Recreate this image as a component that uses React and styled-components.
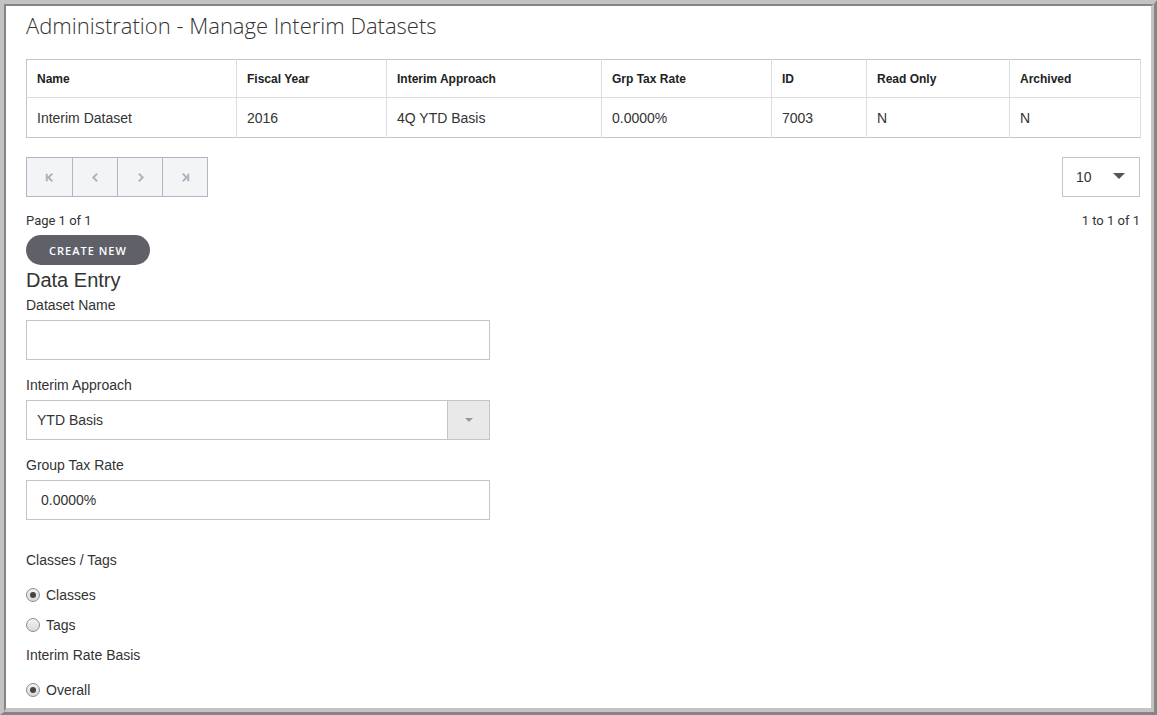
import React from "react";
import styled, { createGlobalStyle } from "styled-components";

const GlobalStyle = createGlobalStyle`
  html, body {
    margin: 0;
    padding: 0;
    background: #fff;
  }
  body {
    font-family: "Liberation Sans", Arial, sans-serif;
    color: #333;
  }
`;

const Frame = styled.div`
  box-sizing: border-box;
  width: 1157px;
  height: 715px;
  border-style: solid;
  border-width: 4px 3px 3px 4px;
  border-color: #c3c3c3 #858585 #858585 #c3c3c3;
  overflow: hidden;
`;

const Inner = styled.div`
  box-sizing: border-box;
  height: 100%;
  border-style: solid;
  border-width: 2px 3px 4px 2px;
  border-color: #858585 #c3c3c3 #c3c3c3 #858585;
  padding: 0 11px 0 20px;
  background: #fff;
  overflow: hidden;
`;

const Title = styled.h1`
  margin: 0;
  padding-top: 5px;
  height: 53px;
  box-sizing: border-box;
  font-family: "Open Sans", sans-serif;
  font-weight: 300;
  font-size: 22px;
  line-height: 28px;
  color: #333;
`;

const Table = styled.table`
  width: 1114px;
  border-collapse: collapse;
  border: 1px solid #c4c4c4;
  table-layout: fixed;
`;

const Th = styled.th`
  text-align: left;
  font-size: 12px;
  font-weight: bold;
  color: #222;
  height: 38px;
  padding: 0 10px;
  border-right: 1px solid #ddd;
  border-bottom: 1px solid #ddd;
  width: ${(p) => p.$w}px;
  box-sizing: border-box;
`;

const Td = styled.td`
  font-size: 14px;
  color: #333;
  height: 39px;
  padding: 0 10px;
  border-right: 1px solid #ddd;
`;

const PagerRow = styled.div`
  display: flex;
  justify-content: space-between;
  align-items: flex-start;
  margin-top: 19px;
`;

const Pager = styled.div`
  display: flex;
  border: 1px solid #b3b5c2;
`;

const PageBtn = styled.button`
  width: 45px;
  height: 38px;
  display: flex;
  align-items: center;
  justify-content: center;
  background: #f3f4f6;
  border: none;
  border-left: ${(p) => (p.$first ? "none" : "1px solid #b3b5c2")};
  padding: 0;
  color: #aeb1bf;
`;

const SizeSelect = styled.div`
  box-sizing: border-box;
  width: 78px;
  height: 40px;
  border: 1px solid #c4c4c4;
  display: flex;
  align-items: center;
  justify-content: space-between;
  padding: 0 14px 0 13px;
  font-size: 14px;
  color: #333;
`;

const Caret = styled.span`
  width: 0;
  height: 0;
  border-left: 6px solid transparent;
  border-right: 6px solid transparent;
  border-top: 6px solid #555;
  margin-bottom: 2px;
`;

const InfoRow = styled.div`
  display: flex;
  justify-content: space-between;
  font-family: Roboto, sans-serif;
  font-size: 13px;
  line-height: 18px;
  margin-top: 15px;
  color: #333;
`;

const CreateBtn = styled.button`
  margin-top: 5px;
  width: 124px;
  height: 30px;
  border-radius: 15px;
  border: none;
  background: #5f6068;
  color: #fff;
  font-family: "Open Sans", sans-serif;
  font-weight: 600;
  font-size: 11px;
  letter-spacing: 1px;
  display: block;
`;

const SectionTitle = styled.h2`
  margin: 1px 0 0;
  font-size: 20px;
  font-weight: normal;
  line-height: 29px;
  color: #333;
`;

const Field = styled.div`
  width: 464px;
  margin-bottom: ${(p) => p.$mb}px;
`;

const Label = styled.div`
  font-size: 14px;
  line-height: 20px;
  margin-bottom: 5px;
  color: #333;
`;

const TextBox = styled.div`
  box-sizing: border-box;
  height: 40px;
  border: 1px solid #c4c4c4;
  display: flex;
  align-items: center;
  padding-left: ${(p) => p.$pad}px;
  font-size: 14px;
  color: #333;
`;

const SelectBox = styled(TextBox)`
  padding-left: 0;
`;

const SelectValue = styled.div`
  flex: 1;
  padding-left: 10px;
`;

const Addon = styled.div`
  width: 41px;
  height: 100%;
  background: #e9e9e9;
  border-left: 1px solid #c4c4c4;
  display: flex;
  align-items: center;
  justify-content: center;
`;

const SmallCaret = styled.span`
  width: 0;
  height: 0;
  border-left: 4px solid transparent;
  border-right: 4px solid transparent;
  border-top: 4px solid #999;
`;

const GroupLabel = styled.div`
  font-size: 14px;
  line-height: 20px;
  margin-bottom: ${(p) => p.$mb}px;
`;

const RadioRow = styled.label`
  display: flex;
  align-items: center;
  gap: 6px;
  font-size: 14px;
  line-height: 20px;
  margin-bottom: ${(p) => p.$mb}px;
`;

const RadioDot = styled.span`
  box-sizing: border-box;
  width: 14px;
  height: 14px;
  border-radius: 50%;
  border: 1px solid #8c8c8c;
  background: linear-gradient(#f2f2f2, #d9d9d9);
  display: flex;
  align-items: center;
  justify-content: center;
  &::after {
    content: "";
    width: 6px;
    height: 6px;
    border-radius: 50%;
    background: ${(p) => (p.$checked ? "#444" : "transparent")};
  }
`;

const Chevron = ({ d }) => (
  <svg width="11" height="11" viewBox="0 0 10 10" fill="none" stroke="currentColor" strokeWidth="1.8">
    <path d={d} />
  </svg>
);

const columns = [
  ["Name", 210],
  ["Fiscal Year", 150],
  ["Interim Approach", 215],
  ["Grp Tax Rate", 170],
  ["ID", 95],
  ["Read Only", 143],
  ["Archived", 131],
];

const row = ["Interim Dataset", "2016", "4Q YTD Basis", "0.0000%", "7003", "N", "N"];

export default function App() {
  return (
    <>
      <GlobalStyle />
      <Frame>
        <Inner>
          <Title>Administration - Manage Interim Datasets</Title>
          <Table>
            <thead>
              <tr>
                {columns.map(([name, w]) => (
                  <Th key={name} $w={w}>{name}</Th>
                ))}
              </tr>
            </thead>
            <tbody>
              <tr>
                {row.map((v, i) => (
                  <Td key={i}>{v}</Td>
                ))}
              </tr>
            </tbody>
          </Table>

          <PagerRow>
            <Pager>
              <PageBtn $first><Chevron d="M2.5 1.5v7M7.5 1.5L4 5l3.5 3.5" /></PageBtn>
              <PageBtn><Chevron d="M6.5 1.5L3 5l3.5 3.5" /></PageBtn>
              <PageBtn><Chevron d="M3.5 1.5L7 5 3.5 8.5" /></PageBtn>
              <PageBtn><Chevron d="M2.5 1.5L6 5 2.5 8.5M7.5 1.5v7" /></PageBtn>
            </Pager>
            <SizeSelect>
              10
              <Caret />
            </SizeSelect>
          </PagerRow>

          <InfoRow>
            <span>Page 1 of 1</span>
            <span>1 to 1 of 1</span>
          </InfoRow>

          <CreateBtn>CREATE NEW</CreateBtn>
          <SectionTitle>Data Entry</SectionTitle>

          <Field $mb={15}>
            <Label>Dataset Name</Label>
            <TextBox $pad={10} />
          </Field>

          <Field $mb={15}>
            <Label>Interim Approach</Label>
            <SelectBox>
              <SelectValue>YTD Basis</SelectValue>
              <Addon><SmallCaret /></Addon>
            </SelectBox>
          </Field>

          <Field $mb={30}>
            <Label>Group Tax Rate</Label>
            <TextBox $pad={14}>0.0000%</TextBox>
          </Field>

          <GroupLabel $mb={15}>Classes / Tags</GroupLabel>
          <RadioRow $mb={10}><RadioDot $checked />Classes</RadioRow>
          <RadioRow $mb={10}><RadioDot />Tags</RadioRow>
          <GroupLabel $mb={15}>Interim Rate Basis</GroupLabel>
          <RadioRow $mb={0}><RadioDot $checked />Overall</RadioRow>
        </Inner>
      </Frame>
    </>
  );
}
